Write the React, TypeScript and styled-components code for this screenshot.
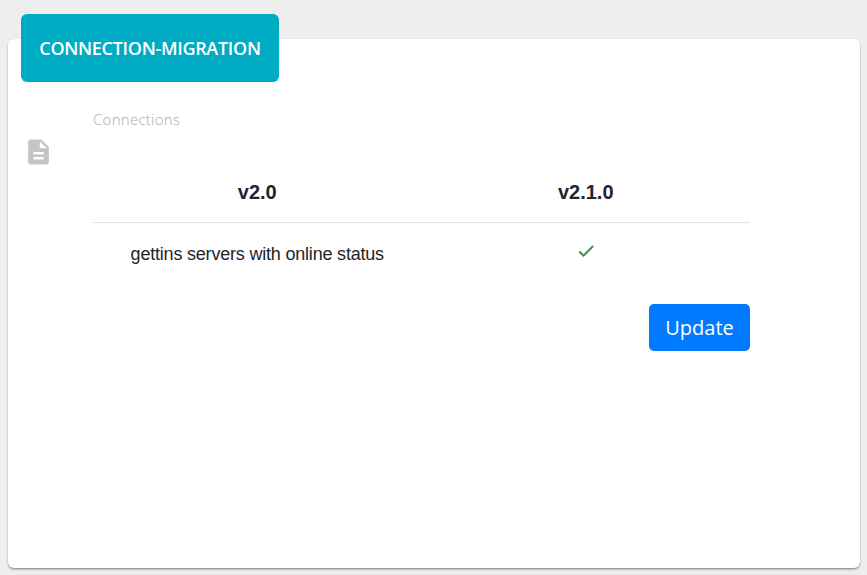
import React from "react";
import styled, { createGlobalStyle } from "styled-components";

const GlobalStyle = createGlobalStyle`
  *, *::before, *::after { box-sizing: border-box; }
  body { margin: 0; background: #eeeeee; font-family: "Open Sans", sans-serif; }
`;

const Page = styled.main`
  height: 575px;
  padding: 39px 7px 7px 8px;
  overflow: hidden;
`;

const Card = styled.section`
  height: 529px;
  background: #fff;
  border-radius: 6px;
  box-shadow:
    0 2px 2px 0 rgba(0, 0, 0, 0.14),
    0 1px 1px 0 rgba(0, 0, 0, 0.2),
    0 1px 3px 0 rgba(0, 0, 0, 0.12);
`;

const CardHeader = styled.header`
  display: flex;
  height: 43px;
  padding-left: 13px;
`;

const Title = styled.h4`
  display: flex;
  align-items: center;
  justify-content: center;
  width: 258px;
  height: 68px;
  margin: -25px 0 0;
  border-radius: 6px;
  background: #00acc4;
  color: #fff;
  font-size: 18px;
  font-weight: 600;
  line-height: 24px;
  letter-spacing: -0.3px;
  white-space: nowrap;
`;

const Body = styled.div`
  display: grid;
  grid-template-columns: 70px 657px;
  padding-left: 15px;
`;

const IconCell = styled.div`
  padding-top: 55px;
  svg { display: block; }
`;

const Label = styled.div`
  margin-top: 27px;
  height: 21px;
  color: #aaaaaa;
  font-size: 15px;
  font-weight: 300;
  line-height: 21px;
  letter-spacing: 0.27px;
`;

const Table = styled.div`
  display: grid;
  grid-template-columns: 1fr 1fr;
  margin-top: 31px;
  font-family: "Liberation Sans", Arial, sans-serif;
  color: #212529;
`;

const HeadCell = styled.div`
  height: 62px;
  padding-top: 18px;
  border-bottom: 1px solid #dee2e6;
  font-size: 20px;
  font-weight: 700;
  line-height: 26px;
  text-align: center;
`;

const Cell = styled.div`
  display: flex;
  justify-content: center;
  height: 81px;
  padding-top: 18px;
  font-size: 18px;
  line-height: 26px;
  letter-spacing: -0.2px;
`;

const Actions = styled.div`
  display: flex;
  justify-content: flex-end;
`;

const UpdateButton = styled.button`
  width: 101px;
  height: 47px;
  padding: 0;
  border: 0;
  border-radius: 5px;
  background: #007bff;
  color: #fff;
  font: 400 20px/30px "Open Sans", sans-serif;
`;

export default function App() {
  return (
    <>
      <GlobalStyle />
      <Page>
        <Card>
          <CardHeader>
            <Title>CONNECTION-MIGRATION</Title>
          </CardHeader>
          <Body>
            <IconCell>
              <svg width="31" height="30" viewBox="0 0 24 24" preserveAspectRatio="none" fill="#c4c4c4" aria-hidden="true">
                <path d="M14 2H6c-1.1 0-1.99.9-1.99 2L4 20c0 1.1.89 2 1.99 2H18c1.1 0 2-.9 2-2V8l-6-6zm2 16H8v-2h8v2zm0-4H8v-2h8v2zm-3-5V3.5L18.500 9H13z" />
              </svg>
            </IconCell>
            <div>
              <Label>Connections</Label>
              <Table>
                <HeadCell>v2.0</HeadCell>
                <HeadCell>v2.1.0</HeadCell>
                <Cell>gettins servers with online status</Cell>
                <Cell>
                  <svg width="20" height="20" viewBox="0 0 24 24" fill="#388e3c" stroke="#388e3c" strokeWidth="0.6" aria-label="Available">
                    <path d="M9 16.170 4.830 12l-1.420 1.410L9 19 21 7l-1.410-1.410z" />
                  </svg>
                </Cell>
              </Table>
              <Actions>
                <UpdateButton type="button">Update</UpdateButton>
              </Actions>
            </div>
          </Body>
        </Card>
      </Page>
    </>
  );
}
